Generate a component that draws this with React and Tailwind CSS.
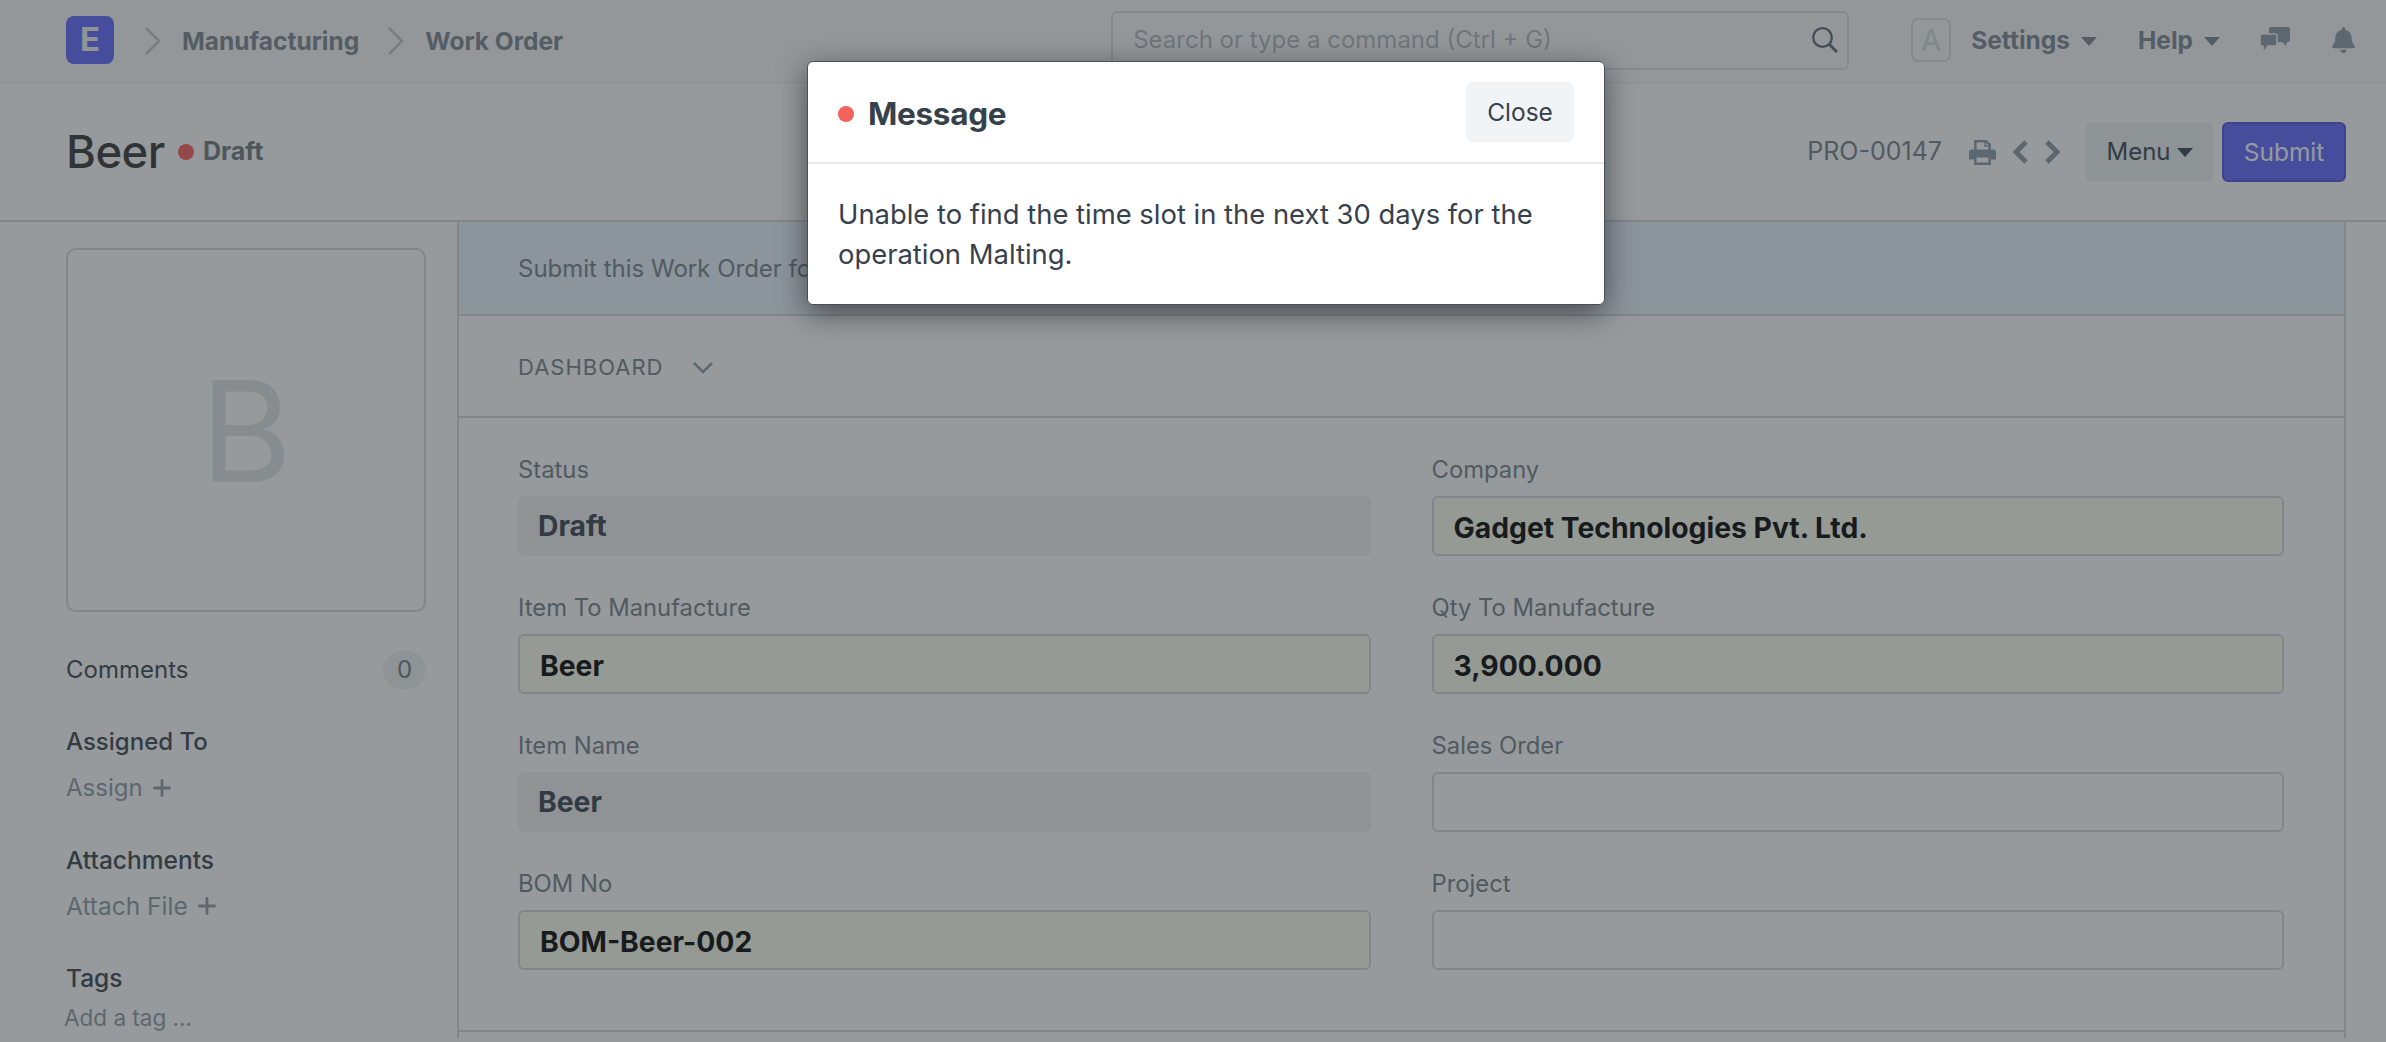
import { Plus } from "lucide-react";
import { FaBell } from "react-icons/fa";

const Caret = ({ className }) => (
  <svg viewBox="0 0 16 9" className={className} fill="currentColor">
    <path d="M0 0h16L8 9z" />
  </svg>
);

const Crumb = () => (
  <svg viewBox="0 0 18 28" className="w-[18px] h-[28px] text-[#c0c6cc]" fill="none" stroke="currentColor" strokeWidth="2.5">
    <path d="M2 1l13 13L2 27" />
  </svg>
);

const SearchIcon = () => (
  <svg viewBox="0 0 26 26" className="w-[26px] h-[26px] text-[#5a6570]" fill="none" stroke="currentColor">
    <circle cx="10.5" cy="10.5" r="9.3" strokeWidth="2.3" />
    <path d="M17.5 17.5L25 25" strokeWidth="3" />
  </svg>
);

const Printer = () => (
  <svg viewBox="0 0 27 25" className="w-[27px] h-[25px] text-[#8d99a6]">
    <path d="M6.3 10V1.3h11l3.4 3.4V10" fill="none" stroke="currentColor" strokeWidth="2.6" />
    <path d="M16 1v5h5" fill="none" stroke="currentColor" strokeWidth="1.6" />
    <path d="M2.5 9.5h22a2.5 2.5 0 0 1 2.5 2.5v7.5h-5.5V15h-16v4.500H0V12a2.500 2.500 0 0 1 2.500-2.500z" fill="currentColor" />
    <path d="M6.300 16.300h14.400v7.400H6.300z" fill="none" stroke="currentColor" strokeWidth="2.600" />
  </svg>
);

const Chev = ({ d }) => (
  <svg viewBox="0 0 18 24" className="w-[18px] h-[24px] text-[#8d99a6]" fill="none" stroke="currentColor" strokeWidth="5">
    <path d={d} />
  </svg>
);

const Chat = () => (
  <svg viewBox="0 0 30 26" className="w-[30px] h-[26px] text-[#8d99a6]" fill="currentColor">
    <path d="M11 0h17a2 2 0 0 1 2 2v11a2 2 0 0 1-2 2h-1l-1 4-4-4H11a2 2 0 0 1-2-2V2a2 2 0 0 1 2-2z" />
    <path d="M2 7h13a2 2 0 0 1 2 2v8a2 2 0 0 1-2 2H8l-5 7v-7H2a2 2 0 0 1-2-2V9a2 2 0 0 1 2-2z" stroke="#f8f9fa" strokeWidth="1.500" />
  </svg>
);

function Field({ label, value, kind }) {
  const box = {
    mandatory: "bg-[#fffff0] border-2 border-[#d1d8dd] text-black font-bold pl-[20px] pt-[4px]",
    readonly: "bg-[#f0f1f2] text-[#36414c] font-bold pl-[20px]",
    empty: "bg-white border-2 border-[#d1d8dd]",
  }[kind];
  return (
    <div className="mb-[32px]">
      <div className="h-[40px] text-[23.8px] leading-[40px] text-[#747e88]">{label}</div>
      <div className={`h-[60px] mt-[6px] rounded-[6px] flex items-center text-[28.3px] ${box}`}>{value}</div>
    </div>
  );
}

export default function App() {
  return (
    <div className="relative h-[1042px] overflow-hidden bg-white font-['Inter',sans-serif]">
      {/* navbar */}
      <div className="h-[84px] bg-[#f8f9fa] border-b-2 border-[#eef0f2] flex items-center pl-[66px] pr-[31px] whitespace-nowrap">
        <div className="w-[48px] h-[48px] rounded-[8px] bg-[#5e64ff] text-[#f0f2f4] text-[33px] font-bold flex items-center justify-center mb-[2px]">E</div>
        <div className="ml-[30px]"><Crumb /></div>
        <div className="ml-[20px] text-[24.5px] font-bold text-[#7a848e]">Manufacturing</div>
        <div className="ml-[28px]"><Crumb /></div>
        <div className="ml-[20px] text-[24.5px] font-bold text-[#7a848e]">Work Order</div>
        <div className="ml-auto w-[738px] h-[59px] mb-[2px] rounded-[6px] border-2 border-[#d8dde1] flex items-center justify-between pl-[20px] pr-[9px] text-[24px] text-[#b0b7be]">
          <span>Search or type a command (Ctrl + G)</span>
          <SearchIcon />
        </div>
        <div className="ml-[62px] w-[40px] h-[44px] mb-[2px] rounded-[7px] border-2 border-[#d8dde1] text-[30px] text-[#d1d8dd] flex items-center justify-center">A</div>
        <div className="ml-[20px] mb-[2px] text-[24.5px] font-bold text-[#7a848e]">Settings</div>
        <Caret className="ml-[11px] w-[16px] h-[9px] text-[#7a848e]" />
        <div className="ml-[41px] mb-[2px] text-[24.5px] font-bold text-[#7a848e]">Help</div>
        <Caret className="ml-[11px] w-[16px] h-[9px] text-[#7a848e]" />
        <div className="ml-[40px] mb-[3px]"><Chat /></div>
        <FaBell className="ml-[42px] mb-[3px] w-[23px] h-[26px] text-[#8d99a6]" />
      </div>

      {/* page head */}
      <div className="h-[138px] border-b-2 border-[#d1d8dd] flex items-center pl-[66px] pr-[40px] whitespace-nowrap">
        <div className="text-[45.5px] font-medium text-[#000] opacity-80 tracking-[-0.5px]">Beer</div>
        <div className="ml-[13px] w-[16px] h-[16px] rounded-full bg-[#ff5858]" />
        <div className="ml-[9px] text-[25px] font-bold text-[#6c7680]">Draft</div>
        <div className="ml-auto text-[25px] text-[#747e88]">PRO-00147</div>
        <div className="ml-[27px]"><Printer /></div>
        <div className="ml-[15px]"><Chev d="M15 2L5 12l10 10" /></div>
        <div className="ml-[15px]"><Chev d="M3 2l10 10L3 22" /></div>
        <div className="ml-[24px] w-[127px] h-[60px] rounded-[6px] bg-[#eef1f3] text-[24px] text-[#36414c] flex items-center justify-center gap-[6px]">
          Menu <Caret className="w-[16px] h-[9px] text-[#36414c]" />
        </div>
        <div className="ml-[9px] w-[124px] h-[60px] rounded-[6px] bg-[#5e64ff] border-2 border-[#4b50dd] text-[24.500px] text-white flex items-center justify-center">Submit</div>
      </div>

      <div className="flex">
        {/* sidebar */}
        <div className="w-[457px] shrink-0 pl-[66px] pr-[31px] pt-[26px]">
          <div className="h-[364px] rounded-[10px] border-2 border-[#d1d8dd] flex items-center justify-center text-[140px] text-[#dfe2e4] pt-[2px]">B</div>
          <div className="mt-[39px] flex items-center justify-between text-[24px] text-[#36414c]">
            <span>Comments</span>
            <span className="w-[43px] h-[38px] rounded-full bg-[#eef1f3] flex items-center justify-center text-[#6c7680]">0</span>
          </div>
          <div className="mt-[33px] text-[24px] font-medium text-[#36414c] leading-[40px]">Assigned To</div>
          <div className="mt-[6px] flex items-center text-[24px] text-[#8d99a6] leading-[40px]">Assign <Plus className="ml-[6px] w-[26px] h-[26px]" strokeWidth={2.6} /></div>
          <div className="mt-[32px] text-[24.500px] font-medium text-[#36414c] leading-[40px]">Attachments</div>
          <div className="mt-[6px] flex items-center text-[24.500px] text-[#8d99a6] leading-[40px]">Attach File <Plus className="ml-[6px] w-[26px] h-[26px]" strokeWidth={2.6} /></div>
          <div className="mt-[32px] text-[24.500px] font-medium text-[#36414c] leading-[40px]">Tags</div>
          <div className="ml-[-2px] text-[22.500px] text-[#8d99a6] leading-[40px]">Add a tag ...</div>
        </div>

        {/* form */}
        <div className="flex-1 mr-[40px] border-x-2 border-[#d1d8dd]">
          <div className="h-[94px] bg-[#ebf3ff] border-b-2 border-[#d1d8dd] pl-[59px] pt-[2px] flex items-center text-[24px] text-[#747e88]">Submit this Work Order for further processing.</div>
          <div className="h-[102px] border-b-2 border-[#d1d8dd] pl-[59px] pt-[3px] flex items-center text-[22px] tracking-[1px] text-[#747e88]">
            DASHBOARD
            <svg viewBox="0 0 20 12" className="ml-[30px] w-[20px] h-[12px] text-[#8d99a6]" fill="none" stroke="currentColor" strokeWidth="2.5"><path d="M1 1l9 9 9-9" /></svg>
          </div>
          <div className="h-[614px] border-b-2 border-[#d1d8dd] pl-[59px] pr-[60px] pt-[32px] grid grid-cols-2 gap-x-[61px] content-start">
            <Field label="Status" value="Draft" kind="readonly" />
            <Field label="Company" value="Gadget Technologies Pvt. Ltd." kind="mandatory" />
            <Field label="Item To Manufacture" value="Beer" kind="mandatory" />
            <Field label="Qty To Manufacture" value="3,900.000" kind="mandatory" />
            <Field label="Item Name" value="Beer" kind="readonly" />
            <Field label="Sales Order" kind="empty" />
            <Field label="BOM No" value="BOM-Beer-002" kind="mandatory" />
            <Field label="Project" kind="empty" />
          </div>
        </div>
      </div>

      {/* backdrop */}
      <div className="absolute inset-0 bg-[#2e3639]/50" />

      {/* modal */}
      <div className="absolute left-[807px] top-[61px] w-[798px] h-[244px] bg-white rounded-[6px] border border-[#4a5058] shadow-[0_8px_30px_rgba(0,0,0,0.5)]">
        <div className="h-[102px] border-b-2 border-[#e6e8ea] flex items-center pl-[30px] pr-[30px]">
          <div className="w-[16px] h-[16px] rounded-full bg-[#f4625c] mt-[3px]" />
          <div className="ml-[14px] text-[31.500px] font-bold text-[#36414c] mt-[3px] tracking-[-0.3px]">Message</div>
          <div className="ml-auto w-[108px] h-[60px] rounded-[6px] bg-[#f0f4f7] text-[24.500px] text-[#36414c] flex items-center justify-center">Close</div>
        </div>
        <div className="pt-[30px] pl-[30px] pr-[30px] text-[27.400px] leading-[40px] text-[#36414c]">
          Unable to find the time slot in the next 30 days for the operation Malting.
        </div>
      </div>
    </div>
  );
}
